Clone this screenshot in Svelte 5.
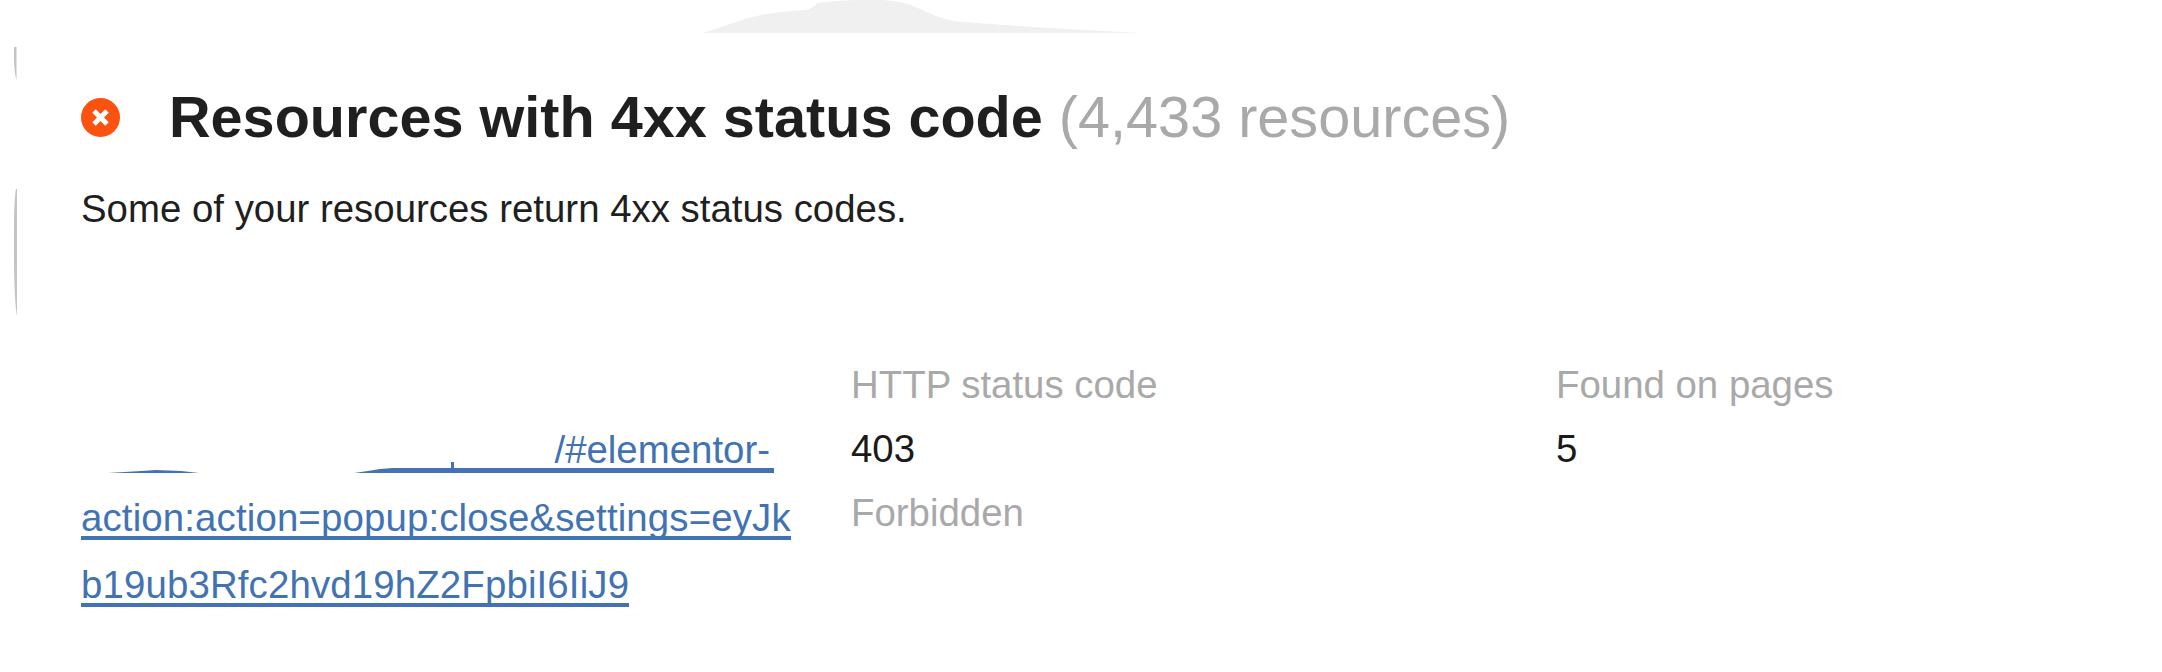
<script>
  const lines = ['action:action=popup:close&settings=eyJk', 'b19ub3Rfc2hvd19hZ2FpbiI6IiJ9'];
</script>

<main class="page">
  <svg class="smudge top" width="440" height="34" viewBox="0 0 440 34" aria-hidden="true">
    <path d="M0 33 L45 18 Q68 12 102 10 Q110 9 114 3 Q145 -1 180 0 Q200 1 215 8 Q240 21 260 22 L330 27 L437 33 Z" />
  </svg>
  <svg class="sliver one" width="5" height="34" viewBox="0 0 5 34" aria-hidden="true"><path d="M1 0 H3.5 V33 Q0.5 24 1 0 Z" /></svg>
  <svg class="sliver two" width="5" height="128" viewBox="0 0 5 128" aria-hidden="true"><path d="M3 0 H4 V127 Q0.5 110 1 40 Q1 10 3 0 Z" /></svg>

  <h2 class="title">
    <span class="icon" aria-hidden="true">
      <svg width="39" height="39" viewBox="0 0 39 39">
        <circle cx="19.5" cy="19.5" r="19.5" fill="#fc5210" />
        <path d="M13 13 L26 26 M26 13 L13 26" stroke="#fff" stroke-width="5" fill="none" />
      </svg>
    </span>
    <span><b>Resources with 4xx status code</b> <span class="count">(4,433 resources)</span></span>
  </h2>
  <p class="desc">Some of your resources return 4xx status codes.</p>

  <section class="table">
    <div class="link-cell">
      <a href="#top" class="first">/#elementor-</a>
      <svg class="cut" width="693" height="5" viewBox="0 0 693 5" aria-hidden="true">
        <path d="M27 5 L60 3 L75 2 L100 3 L118 5 Z" />
        <path d="M273 5 L280 4 L290 2.5 L299 1 L312 0 L370 0 V-6 H373 V0 L693 0 V5 Z" />
      </svg>
      {#each lines as line}
        <a href="#top" class="line">{line}</a>
      {/each}
    </div>
    <div class="col status">
      <div class="head">HTTP status code</div>
      <div class="val">403</div>
      <div class="sub">Forbidden</div>
    </div>
    <div class="col">
      <div class="head">Found on pages</div>
      <div class="val">5</div>
    </div>
  </section>
</main>

<style>
  :global(body) { margin: 0; background: #fff; }
  .page {
    position: relative;
    width: 2162px;
    height: 672px;
    overflow: hidden;
    box-sizing: border-box;
    padding: 82px 0 0 81px;
    font-family: "Liberation Sans", Arial, sans-serif;
    color: #1f1f1f;
  }
  .smudge, .sliver { position: absolute; }
  .smudge path { fill: #f0f0f0; }
  .sliver path { fill: #c4c4c4; }
  .top { left: 703px; top: 0; }
  .one { left: 13px; top: 47px; }
  .two { left: 13px; top: 189px; }
  .title {
    display: flex;
    align-items: center;
    margin: 0;
    font-size: 57.6px;
    line-height: 70px;
    font-weight: 400;
  }
  .icon { display: flex; width: 88px; flex: none; }
  .title b { font-weight: 700; }
  .count { color: #a9a9a9; }
  .desc { margin: 33px 0 0; font-size: 38.4px; line-height: 48px; color: #1f1f1f; }
  .table {
    display: grid;
    grid-template-columns: 770px 705px 1fr;
    margin-top: 128px;
    font-size: 38.4px;
  }
  .link-cell { padding-top: 63px; position: relative; }
  a { color: #4173b4; text-decoration: none; display: block; }
  .first { width: 689px; text-align: right; padding-top: 8px; line-height: 36px; }
  .cut { display: block; fill: #4173b4; overflow: visible; }
  .line {
    width: fit-content;
    padding-top: 8px;
    line-height: 36px;
    margin-top: 19px;
    letter-spacing: 0.14px;
    border-bottom: 4px solid #4173b4;
  }
  .head, .sub { color: #a9a9a9; }
  .head, .val, .sub { line-height: 48px; }
  .val, .sub { margin-top: 16px; }
  .val { color: #1a1a1a; }
</style>
